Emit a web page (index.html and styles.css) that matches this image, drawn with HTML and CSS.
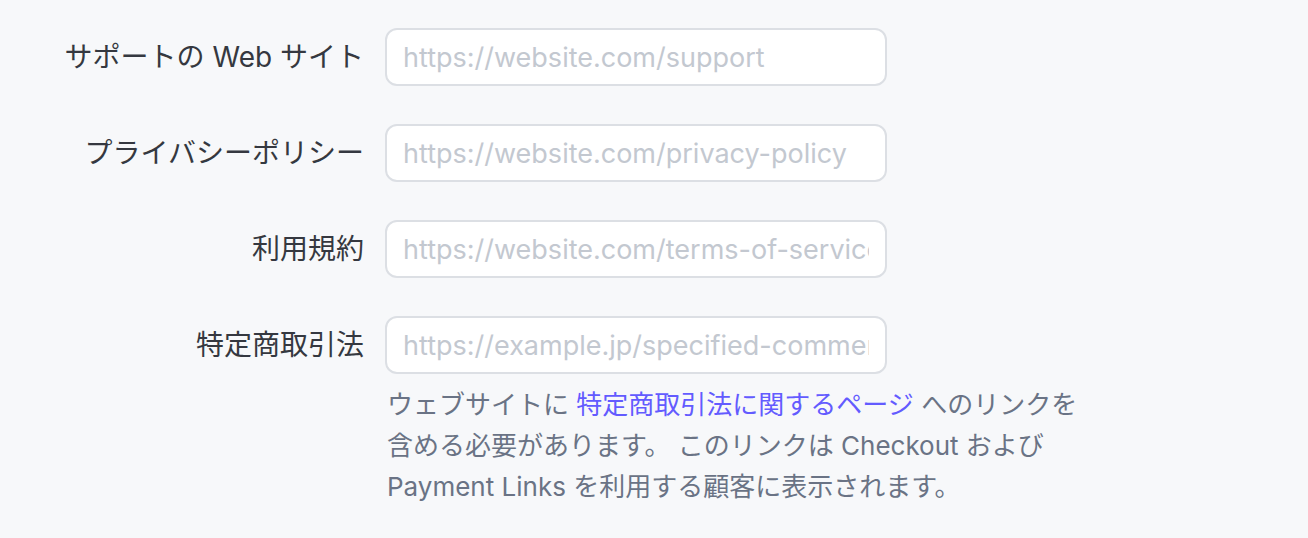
FILE: index.html
```html
<!DOCTYPE html>
<html lang="ja">
<head>
<meta charset="utf-8">
<link rel="stylesheet" href="styles.css">
</head>
<body>
<div class="form">
  <div class="row">
    <label class="label">サポートの Web サイト</label>
    <div class="field"><input class="input" type="text" placeholder="https://website.com/support"></div>
  </div>
  <div class="row">
    <label class="label">プライバシーポリシー</label>
    <div class="field"><input class="input" type="text" placeholder="https://website.com/privacy-policy"></div>
  </div>
  <div class="row">
    <label class="label">利用規約</label>
    <div class="field"><input class="input" type="text" placeholder="https://website.com/terms-of-service"></div>
  </div>
  <div class="row">
    <label class="label">特定商取引法</label>
    <div class="field">
      <input class="input" type="text" placeholder="https://example.jp/specified-commercial-transactions">
      <p class="help">ウェブサイトに <a class="link" href="#">特定商取引法に関するページ</a> へのリンクを含める必要があります。 このリンクは Checkout および Payment Links を利用する顧客に表示されます。</p>
    </div>
  </div>
</div>
</body>
</html>
```

FILE: styles.css
```css
html, body {
  margin: 0;
  padding: 0;
  background: #f7f8fa;
}
body {
  font-family: Inter, "Noto Sans CJK JP", sans-serif;
  width: 1308px;
  height: 538px;
  overflow: hidden;
}
.form {
  display: flex;
  flex-direction: column;
  gap: 38px;
  padding-top: 28px;
}
.row {
  display: flex;
  align-items: flex-start;
  gap: 21px;
}
.label {
  width: 364px;
  flex: none;
  text-align: right;
  font-size: 28px;
  line-height: 58px;
  color: #353840;
  white-space: nowrap;
}
.field {
  width: 502px;
  flex: none;
}
.input {
  box-sizing: border-box;
  display: block;
  width: 502px;
  height: 58px;
  margin: 0;
  padding: 0 16px;
  border: 2px solid #dcdfe4;
  border-radius: 12px;
  background: #ffffff;
  font-family: Inter, "Noto Sans CJK JP", sans-serif;
  font-size: 27px;
  color: #30333b;
  outline: none;
}
.input::placeholder {
  color: #c3c8d0;
  opacity: 1;
}
.help {
  width: 700px;
  margin: 10px 0 0 2px;
  font-size: 26px;
  line-height: 41px;
  color: #6a7385;
}
.link {
  color: #635bff;
  text-decoration: none;
}
```
